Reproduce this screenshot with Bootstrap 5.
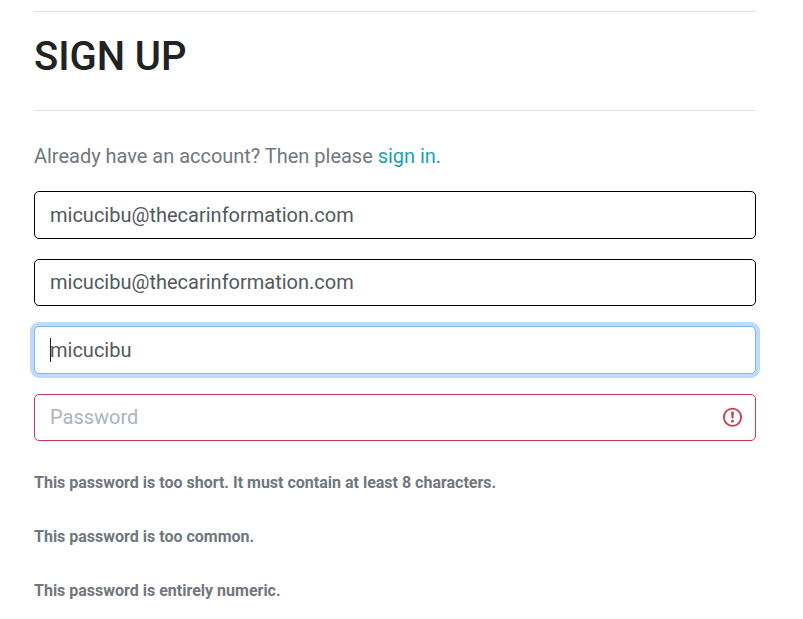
<!DOCTYPE html>
<html lang="en">
<head>
<meta charset="utf-8">
<meta name="viewport" content="width=device-width, initial-scale=1">
<title>Sign up</title>
<link href="https://cdn.jsdelivr.net/npm/bootstrap@5.3.0/dist/css/bootstrap.min.css" rel="stylesheet">
<style>
body{font-family:Roboto,sans-serif;color:#70777e;background:#fff;overflow:hidden}
.signup{width:722px;margin-left:34px;padding-top:11px}
.heading-band{height:100px;border-top:1px solid #dfe1e3;border-bottom:1px solid #dfe1e3}
.heading-band h1{font-size:40px;line-height:48px;font-weight:500;color:#222;padding-top:21px;letter-spacing:-.05px}
.lead-in{font-size:20px;line-height:30px;margin-top:30px;margin-bottom:20px;letter-spacing:-.018px}
.lead-in a{color:#17a2b4;text-decoration:none;letter-spacing:-.03px}
.signup-form{gap:20px}
.signup-form .form-control{height:47.5px;border:1px solid #000;border-radius:5px;font-size:20px;line-height:30px;padding:8px 15px;color:#53585d}
.signup-form .form-control.active-field{border-color:#80b8f0;box-shadow:0 0 0 4px #bfdbfc}
.signup-form .form-control.invalid-field{border-color:#cb3a50}
.signup-form .form-control::placeholder{color:#a9b5c0;opacity:1}
.caret-line{left:16px;width:1px;height:24px;background:#222}
.field-alert{right:14px}
.error-list{font-size:16px;line-height:24px;font-weight:700;margin-top:30px;gap:30px}
</style>
<script src="https://cdn.jsdelivr.net/npm/bootstrap@5.3.0/dist/js/bootstrap.bundle.min.js"></script>
</head>
<body>
<main class="signup">
  <header class="heading-band"><h1 class="m-0">SIGN UP</h1></header>
  <p class="lead-in">Already have an account? Then please <a href="#">sign in</a>.</p>
  <form class="signup-form d-flex flex-column">
    <input class="form-control" type="email" value="micucibu@thecarinformation.com" aria-label="Email">
    <input class="form-control" type="email" value="micucibu@thecarinformation.com" aria-label="Confirm email">
    <div class="position-relative">
      <input class="form-control active-field" type="text" value="micucibu" aria-label="Username">
      <span class="caret-line position-absolute top-50 translate-middle-y"></span>
    </div>
    <div class="position-relative">
      <input class="form-control invalid-field" type="password" placeholder="Password" aria-label="Password">
      <svg class="field-alert position-absolute top-50 translate-middle-y" width="20" height="20" viewBox="0 0 20 20"><g transform="translate(.5 .2)"><circle cx="10" cy="10" r="8.6" fill="none" stroke="#cf3850" stroke-width="1.8"/><path d="M8.6 4.6h2.8l-.5 6.8H9.1z" fill="#cf3850"/><circle cx="10" cy="14" r="1.4" fill="#cf3850"/></g></svg>
    </div>
  </form>
  <div class="error-list d-flex flex-column">
    <span>This password is too short. It must contain at least 8 characters.</span>
    <span>This password is too common.</span>
    <span>This password is entirely numeric.</span>
  </div>
</main>
</body>
</html>
